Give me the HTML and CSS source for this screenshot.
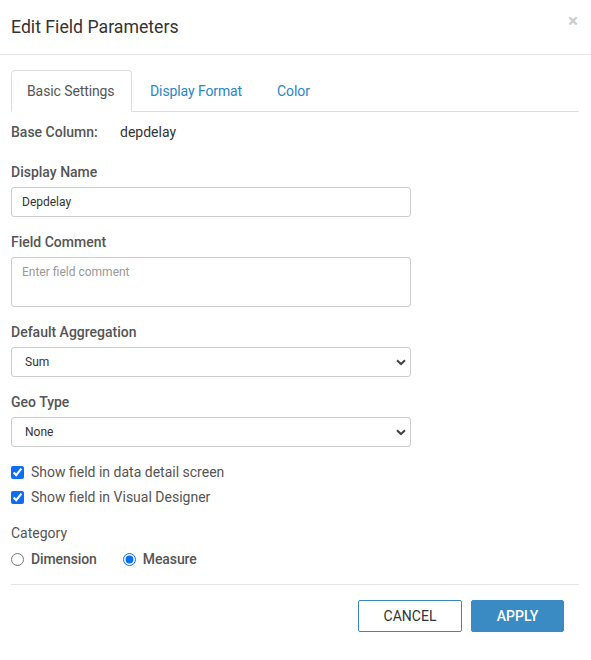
FILE: index.html
```html
<!DOCTYPE html>
<html>
<head>
<meta charset="utf-8">
<link rel="stylesheet" href="styles.css">
</head>
<body>
<div class="modal">
  <div class="modal-header">
    <h4 class="modal-title">Edit Field Parameters</h4>
    <span class="close">×</span>
  </div>
  <div class="modal-body">
    <ul class="tabs">
      <li class="tab active">Basic Settings</li>
      <li class="tab">Display Format</li>
      <li class="tab">Color</li>
    </ul>
    <div class="base-row">
      <span class="base-label">Base Column:</span>
      <span class="base-value">depdelay</span>
    </div>
    <div class="group">
      <label class="label">Display Name</label>
      <input class="control" type="text" value="Depdelay">
    </div>
    <div class="group">
      <label class="label">Field Comment</label>
      <textarea class="control area" placeholder="Enter field comment"></textarea>
    </div>
    <div class="group">
      <label class="label">Default Aggregation</label>
      <div class="select-wrap">
        <select class="control select"><option>Sum</option></select>
        <svg class="chev" width="10" height="7" viewBox="0 0 10 7"><path d="M1 1.2 L5 5 L9 1.2" fill="none" stroke="#444" stroke-width="2"/></svg>
      </div>
    </div>
    <div class="group">
      <label class="label">Geo Type</label>
      <div class="select-wrap">
        <select class="control select"><option>None</option></select>
        <svg class="chev" width="10" height="7" viewBox="0 0 10 7"><path d="M1 1.2 L5 5 L9 1.2" fill="none" stroke="#444" stroke-width="2"/></svg>
      </div>
    </div>
    <div class="checks">
      <label class="check"><input type="checkbox" checked><span>Show field in data detail screen</span></label>
      <label class="check"><input type="checkbox" checked><span>Show field in Visual Designer</span></label>
    </div>
    <div class="category">
      <div class="cat-label">Category</div>
      <div class="radios">
        <label class="radio"><input type="radio" name="cat"><span>Dimension</span></label>
        <label class="radio"><input type="radio" name="cat" checked><span>Measure</span></label>
      </div>
    </div>
    <div class="footer">
      <button class="btn btn-default">CANCEL</button>
      <button class="btn btn-primary">APPLY</button>
    </div>
  </div>
</div>
</body>
</html>
```
FILE: styles.css
```css
* { box-sizing: border-box; }
html, body { margin: 0; padding: 0; background: #fff; }
body {
  font-family: Roboto, "Liberation Sans", Arial, sans-serif;
  font-size: 14px;
  color: #333;
  width: 591px;
  height: 660px;
  overflow: hidden;
}
.modal-header {
  height: 55px;
  border-bottom: 1px solid #e5e5e5;
  display: flex;
  align-items: flex-start;
  justify-content: space-between;
  padding: 0 12px 0 11px;
}
.modal-title {
  margin: 0;
  font-size: 17.7px;
  font-weight: 400;
  line-height: 24px;
  padding-top: 15px;
  color: #333;
}
.close {
  font-size: 19px;
  font-weight: 700;
  line-height: 20px;
  color: #000;
  opacity: 0.2;
  padding-top: 11px;
  margin-right: 1px;
}
.modal-body {
  padding: 15px 12px 0 11px;
}
.tabs {
  list-style: none;
  margin: 0;
  padding: 0;
  display: flex;
  border-bottom: 1px solid #ddd;
  height: 42px;
}
.tab {
  height: 42px;
  line-height: 40px;
  padding: 0 15px;
  margin-right: 2px;
  color: #2a86c6;
  border: 1px solid transparent;
  border-radius: 4px 4px 0 0;
  letter-spacing: -0.1px;
}
.tab.active {
  color: #555;
  border-color: #ddd;
  border-bottom-color: #fff;
  background: #fff;
  width: 121px;
}
.tab + .tab + .tab { margin-left: 1px; }
.base-row {
  margin-top: 10px;
  line-height: 20px;
  display: flex;
}
.base-label {
  font-weight: 500;
  color: #555;
  width: 109px;
}
.base-value { color: #333; }
.group { margin-top: 15px; }
.base-row + .group { margin-top: 20px; }
.label {
  display: block;
  font-weight: 500;
  color: #555;
  line-height: 20px;
  margin-bottom: 5px;
}
.control {
  display: block;
  width: 400px;
  height: 30px;
  border: 1px solid #ccc;
  border-radius: 3px;
  padding: 0 10px;
  font-family: Roboto, "Liberation Sans", Arial, sans-serif;
  font-size: 12px;
  color: #333;
  background: #fff;
  margin: 0;
}
.area {
  height: 50px;
  padding-top: 7px;
  resize: none;
}
.area::placeholder { color: #999; }
.select-wrap {
  position: relative;
  width: 400px;
}
.select {
  appearance: none;
  -webkit-appearance: none;
  padding-left: 13px;
}
.chev {
  position: absolute;
  right: 5px;
  top: 12px;
}
.checks { margin-top: 15px; }
.check {
  display: flex;
  align-items: center;
  height: 20px;
  color: #555;
}
.check + .check { margin-top: 5px; }
.check input, .radio input {
  margin: 0 7px 0 0;
  width: 13px;
  height: 13px;
  accent-color: #0b6ef5;
}
.category { margin-top: 16px; }
.cat-label {
  line-height: 20px;
  color: #555;
}
.radios {
  margin-top: 6px;
  display: flex;
  height: 20px;
}
.radio {
  display: flex;
  align-items: center;
  font-weight: 500;
  color: #555;
  margin-right: 26px;
}
.radio span { letter-spacing: -0.1px; }
.footer {
  margin-top: 15px;
  border-top: 1px solid #e5e5e5;
  padding: 15px 15px 0 0;
  display: flex;
  justify-content: flex-end;
  gap: 9px;
}
.btn {
  height: 32px;
  font-family: Roboto, "Liberation Sans", Arial, sans-serif;
  font-size: 14px;
  border-radius: 2px;
  padding: 0;
  cursor: pointer;
}
.btn-default {
  width: 104px;
  background: #fff;
  border: 1px solid #3a87c0;
  color: #333;
}
.btn-primary {
  width: 93px;
  background: #3a8ac4;
  border: 1px solid #3a8ac4;
  color: #fff;
  font-weight: 500;
}
```
